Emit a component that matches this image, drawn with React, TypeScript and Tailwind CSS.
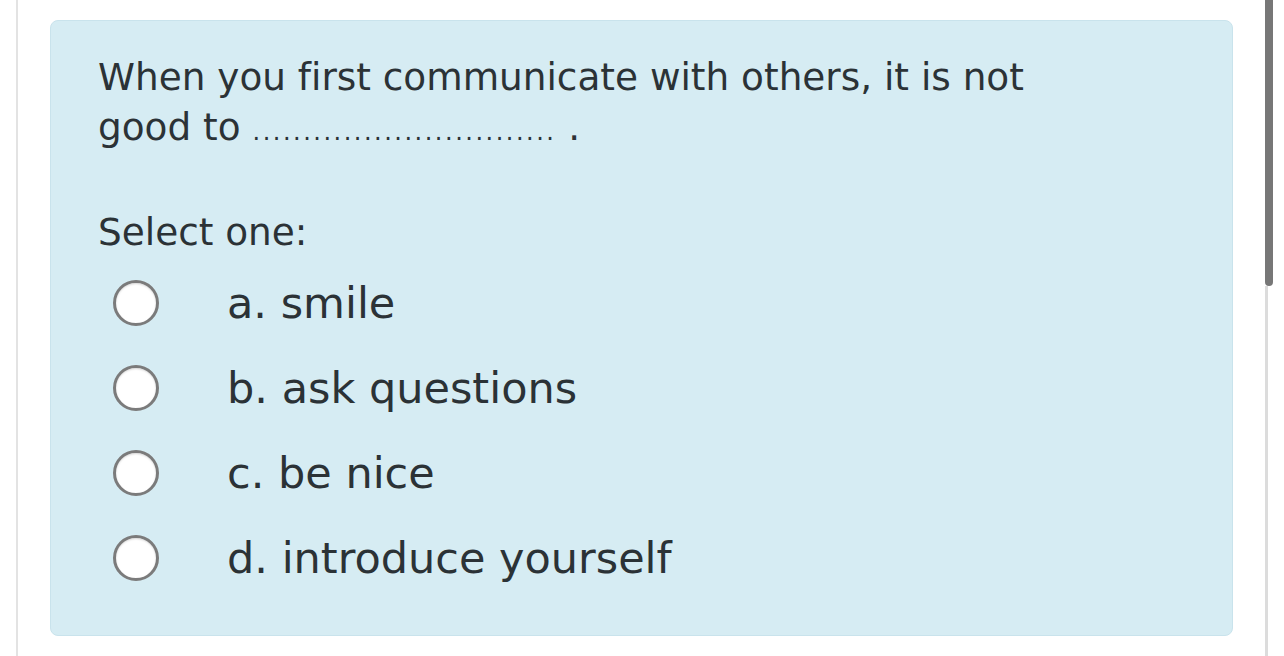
import React from 'react'

const options = ['a. smile', 'b. ask questions', 'c. be nice', 'd. introduce yourself']

function Radio() {
  return (
    <span className="block w-[46px] h-[46px] shrink-0 rounded-full border-[3px] border-[#7b7b7b] bg-white shadow-[inset_0_1px_2px_rgba(0,0,0,0.15)]" />
  )
}

export default function App() {
  return (
    <div className="flex h-[656px] w-[1284px] overflow-hidden bg-white font-['DejaVu_Sans',Verdana,sans-serif] text-[#2b3236] [font-variant-ligatures:none]">
      {/* left rule */}
      <div className="w-[16px] shrink-0" />
      <div className="w-[2px] shrink-0 bg-[#e3e3e3]" />

      {/* question */}
      <div className="w-[1247px] shrink-0 pl-[32px] pt-[20px]">
        <div className="h-[616px] w-[1183px] rounded-[8px] border border-[#c9e3ec] bg-[#d6ecf3] pl-[47px] pt-[31px]">
          <p className="w-[960px] text-[37.4px] leading-[50px]">
            When you first communicate with others, it is not good to{' '}
            <span className="text-[24px] leading-none tracking-[2.5px]">..............................</span>
            {' '}.
          </p>
          <p className="mt-[55px] text-[37.4px] leading-[50px]">Select one:</p>
          <div className="ml-[15px] mt-[3px] flex flex-col">
            {options.map((o) => (
              <label key={o} className="flex h-[85px] items-center">
                <Radio />
                <span className="ml-[68px] text-[43px] leading-[50px]">{o}</span>
              </label>
            ))}
          </div>
        </div>
      </div>

      {/* scrollbar */}
      <div className="flex w-[19px] shrink-0 flex-col items-start">
        <div className="h-[286px] w-[8px] rounded-b-[4px] bg-[#777777]" />
        <div className="w-[3px] flex-1 bg-[#dcdcdc]" />
      </div>
      <div className="w-[2px] shrink-0 bg-[#5a5a5a]" />
    </div>
  )
}
